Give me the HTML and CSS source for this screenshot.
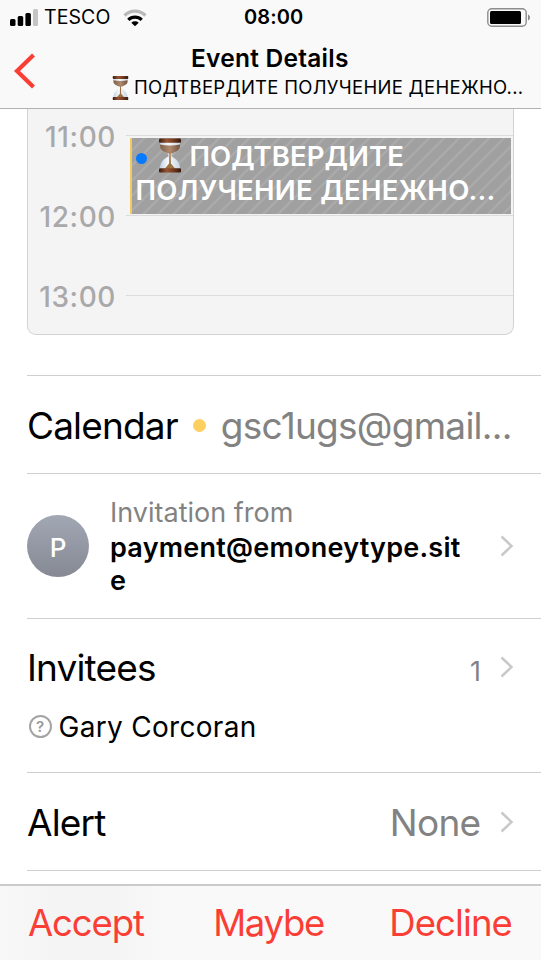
FILE: index.html
```html
<!DOCTYPE html>
<html lang="en">
<head>
<meta charset="utf-8">
<title>Event Details</title>
<link rel="stylesheet" href="styles.css">
</head>
<body>
<svg class="defs" width="0" height="0" aria-hidden="true">
  <defs>
    <linearGradient id="wood" x1="0" x2="1"><stop offset="0" stop-color="#3c1c0e"/><stop offset=".35" stop-color="#965432"/><stop offset=".6" stop-color="#7c4122"/><stop offset="1" stop-color="#34180c"/></linearGradient>
    <linearGradient id="sand" x1="0" x2="1"><stop offset="0" stop-color="#80604a"/><stop offset=".5" stop-color="#ae8b70"/><stop offset="1" stop-color="#735340"/></linearGradient>
    <linearGradient id="bulb" x1="0" x2="1"><stop offset="0" stop-color="#c3d1e2"/><stop offset=".4" stop-color="#f8fafc"/><stop offset="1" stop-color="#c9d5e3"/></linearGradient>
    <symbol id="hourglass" viewBox="0 0 24 34">
      <path d="M2 3h20v4c0 5-5 6-8.500 9v2C18 20 22 24 22 30v1H2v-1c0-6 4-10 8.500-12v-2C7 13 2 12 2 7z" fill="url(#bulb)"/>
      <path d="M2 6q10 2 20 0v1.500c0 4.500-4 5.500-7.500 7.500h-5C6 13 2 12 2 7.500z" fill="url(#sand)"/>
      <path d="M11.400 14h1.200l.3 11 4.600 5.500h-11l4.600-5.500z" fill="#9c7340"/>
      <rect x="1" y="0" width="22" height="4.200" rx="1.200" fill="url(#wood)"/>
      <rect x="1" y="29.800" width="22" height="4.200" rx="1.200" fill="url(#wood)"/>
    </symbol>
    <symbol id="chevron" viewBox="0 0 14 22"><path d="M1.500 1.500 11.500 11 1.500 20.500" fill="none" stroke="#c9c9cc" stroke-width="2.500"/></symbol>
  </defs>
</svg>
<div class="screen">
  <header class="header">
    <div class="status">
      <svg class="signal" width="29" height="17" viewBox="0 0 29 17"><rect x="0" y="10" width="5.500" height="7" rx="1.500"/><rect x="7.700" y="7" width="5.500" height="10" rx="1.500"/><rect x="15.400" y="4" width="5.500" height="13" rx="1.500"/><rect x="23" y="0" width="5" height="17" rx="1.500" fill="#c4c4c4"/></svg>
      <span class="carrier">TESCO</span>
      <svg class="wifi" width="24" height="18" viewBox="0 0 24 18" fill="none" stroke-width="3.200"><path d="M1.500 6.500a15 15 0 0 1 21 0" stroke="#b9b9b9"/><path d="M5.300 10.800a9.600 9.600 0 0 1 13.400 0" stroke="#000"/><path d="M12 17.200 8.300 13.800a5.400 5.400 0 0 1 7.400 0z" fill="#000"/></svg>
      <span class="clock">08:00</span>
      <svg class="battery" width="44" height="20" viewBox="0 0 44 20"><rect x=".8" y=".8" width="38.400" height="17.400" rx="4" fill="none" stroke="#8c8c8c" stroke-width="1.400"/><rect x="3" y="3" width="31" height="13" rx="1.500"/><path d="M41 6.500c2.700.8 2.700 5.200 0 6z" fill="#8c8c8c"/></svg>
    </div>
    <div class="nav">
      <svg class="back" width="24" height="38" viewBox="0 0 24 38"><path d="M20.500 3 4 19l16.500 16" fill="none" stroke="#fa3e35" stroke-width="4.200"/></svg>
      <div class="titles">
        <h1 class="title">Event Details</h1>
        <div class="subtitle"><svg class="glass-sm"><use href="#hourglass"/></svg><span class="subtext">ПОДТВЕРДИТЕ ПОЛУЧЕНИЕ ДЕНЕЖНО...</span></div>
      </div>
    </div>
  </header>
  <main class="content">
    <section class="day">
      <div class="hour"><span class="time">11:00</span><i class="rule"></i></div>
      <div class="hour"><span class="time">12:00</span><i class="rule"></i></div>
      <div class="hour"><span class="time">13:00</span><i class="rule"></i></div>
      <div class="event">
        <div class="event-line"><i class="dot-blue"></i><svg class="glass"><use href="#hourglass"/></svg><span class="ev1">ПОДТВЕРДИТЕ</span></div>
        <div class="event-line"><span class="ev2">ПОЛУЧЕНИЕ ДЕНЕЖНО...</span></div>
      </div>
    </section>
    <section class="row calendar">
      <span class="label cal">Calendar</span><i class="dot-yellow"></i><span class="value mail">gsc1ugs@gmail...</span>
    </section>
    <section class="row organizer">
      <span class="avatar">P</span>
      <div class="from"><div class="caption">Invitation from</div><div class="address"><span>payment@emoneytype.sit</span><br>e</div></div>
      <svg class="chev"><use href="#chevron"/></svg>
    </section>
    <section class="row invitees">
      <div class="line"><span class="label">Invitees</span><span class="count">1</span><svg class="chev"><use href="#chevron"/></svg></div>
      <div class="person"><span class="unknown">?</span><span class="name">Gary Corcoran</span></div>
    </section>
    <section class="row alert">
      <span class="label">Alert</span><span class="value none">None</span><svg class="chev"><use href="#chevron"/></svg>
    </section>
  </main>
  <footer class="toolbar"><span class="accept">Accept</span><span class="maybe">Maybe</span><span class="decline">Decline</span></footer>
</div>
</body>
</html>
```
FILE: styles.css
```css
* { box-sizing: border-box; }
body { margin: 0; background: #fff; color: #000; font-family: Inter, "Liberation Sans", sans-serif; }
.defs { position: absolute; }
svg { display: block; flex: none; }
span { white-space: nowrap; }
.screen { width: 541px; height: 960px; display: flex; flex-direction: column; overflow: hidden; }

.header { height: 109px; flex: none; background: #f9f9f9; border-bottom: 1px solid #b2b2b2; }
.status { height: 35px; display: flex; align-items: center; padding: 0 10px; font-size: 19px; line-height: 35px; }
.signal { margin-top: -1px; }
.carrier { margin-left: 5px; width: 67px; font-size: 19.500px; letter-spacing: .1px; }
.wifi { margin-left: 12px; }
.clock { margin-left: 97px; width: 60px; font-size: 20px; font-weight: 600; letter-spacing: .1px; }
.battery { margin-left: auto; margin-right: 0; }
.nav { display: flex; height: 73px; padding-left: 13px; }
.back { margin-top: 17px; }
.titles { flex: 1; padding-top: 8px; }
.title { margin: 0 0 0 154px; font-size: 24.500px; line-height: 31px; height: 30px; font-weight: 600; letter-spacing: .25px; white-space: nowrap; }
.subtitle { display: flex; align-items: center; margin-left: 74px; height: 29px; font-size: 18.500px; line-height: 29px; letter-spacing: .29px; }
.glass-sm { width: 19px; height: 24px; margin-right: 4px; }

.content { flex: 1; min-height: 0; overflow: hidden; }
.day { position: relative; width: 487px; height: 226px; margin: 0 0 40px 27px; padding-top: 8px; background: #f4f4f4; border: 1px solid #d3d3d3; border-top: 0; border-radius: 0 0 9px 9px; }
.hour { display: flex; height: 80px; padding-left: 11px; align-items: flex-start; }
.time { width: 77px; text-align: right; font-size: 28px; line-height: 40px; font-weight: 500; letter-spacing: .6px; color: #a9a9ab; }
.rule { flex: 1; height: 1px; margin: 18px 0 0 10px; background: #dcdcdc; }
.event { position: absolute; left: 101.500px; top: 29px; width: 381.500px; height: 76px; padding: 2px 0 0 4px; border-left: 2.500px solid #f2ca62; color: #fff; font-size: 27.500px; font-weight: 600; background: repeating-linear-gradient(135deg, #a0a0a0 0 7px, #acacac 8.500px 9px, #a0a0a0 10.600px); }
.event-line { display: flex; height: 33.500px; line-height: 33.500px; }
.dot-blue { width: 11px; height: 11px; margin: 13px 11px 0 0; border-radius: 50%; background: #087aff; }
.glass { width: 24px; height: 35px; margin: -2px 8px 0 0; }
.ev1 { letter-spacing: .1px; }
.ev2 { letter-spacing: .3px; }

.row { margin-left: 27px; border-top: 1px solid #cfcfd1; display: flex; }
.label, .value { font-size: 37px; line-height: 46px; letter-spacing: -.85px; }
.value { color: #828282; }
.calendar { height: 98px; padding-top: 27px; }
.dot-yellow { width: 13px; height: 13px; margin: 16px 15px 0 15px; border-radius: 50%; background: #fdce60; }
.mail { letter-spacing: -.75px; }
.organizer { height: 145px; }
.avatar { width: 62px; height: 62px; margin-top: 41px; border-radius: 50%; background: linear-gradient(#a2a7b4, #868993); color: #fff; font-size: 26px; font-weight: 500; line-height: 65px; text-align: center; }
.from { width: 352px; margin: 21px 0 0 21px; font-size: 27px; line-height: 33px; }
.caption { color: #828282; height: 36px; line-height: 35px; }
.address { font-weight: 600; letter-spacing: .24px; }
.chev { width: 14px; height: 22px; }
.organizer .chev { margin: 61px 0 0 37.500px; }
.invitees { height: 154px; flex-direction: column; padding-top: 26px; }
.line { display: flex; height: 46px; }
.count { margin-left: auto; font-size: 27px; line-height: 53px; color: #828282; }
.line .chev { margin: 11px 27.500px 0 18.500px; }
.person { display: flex; align-items: center; margin-top: 17px; height: 38px; font-size: 28px; line-height: 38px; }
.unknown { width: 23px; height: 23px; margin: -1px 7px 0 1.500px; border: 2px solid #a4a4a4; border-radius: 50%; color: #999; font-size: 15px; font-weight: 600; line-height: 19px; text-align: center; }
.name { letter-spacing: .3px; }
.alert { height: 99px; padding-top: 27px; border-bottom: 1px solid #cfcfd1; }
.none { margin-left: auto; letter-spacing: -.7px; }
.alert .chev { margin: 11px 27.500px 0 19px; }

.toolbar { height: 76px; flex: none; display: flex; justify-content: space-between; padding: 0 29px 0 28px; border-top: 2px solid #cbcbcb; background: linear-gradient(90deg, #f8f8f8, #f4f4f4 60px 110px, #f9f9f9 170px); color: #fa3e35; font-size: 36.500px; line-height: 75px; letter-spacing: -1.100px; }
.maybe { margin-left: 4px; letter-spacing: -1.300px; }
.decline { letter-spacing: -.9px; }
```
